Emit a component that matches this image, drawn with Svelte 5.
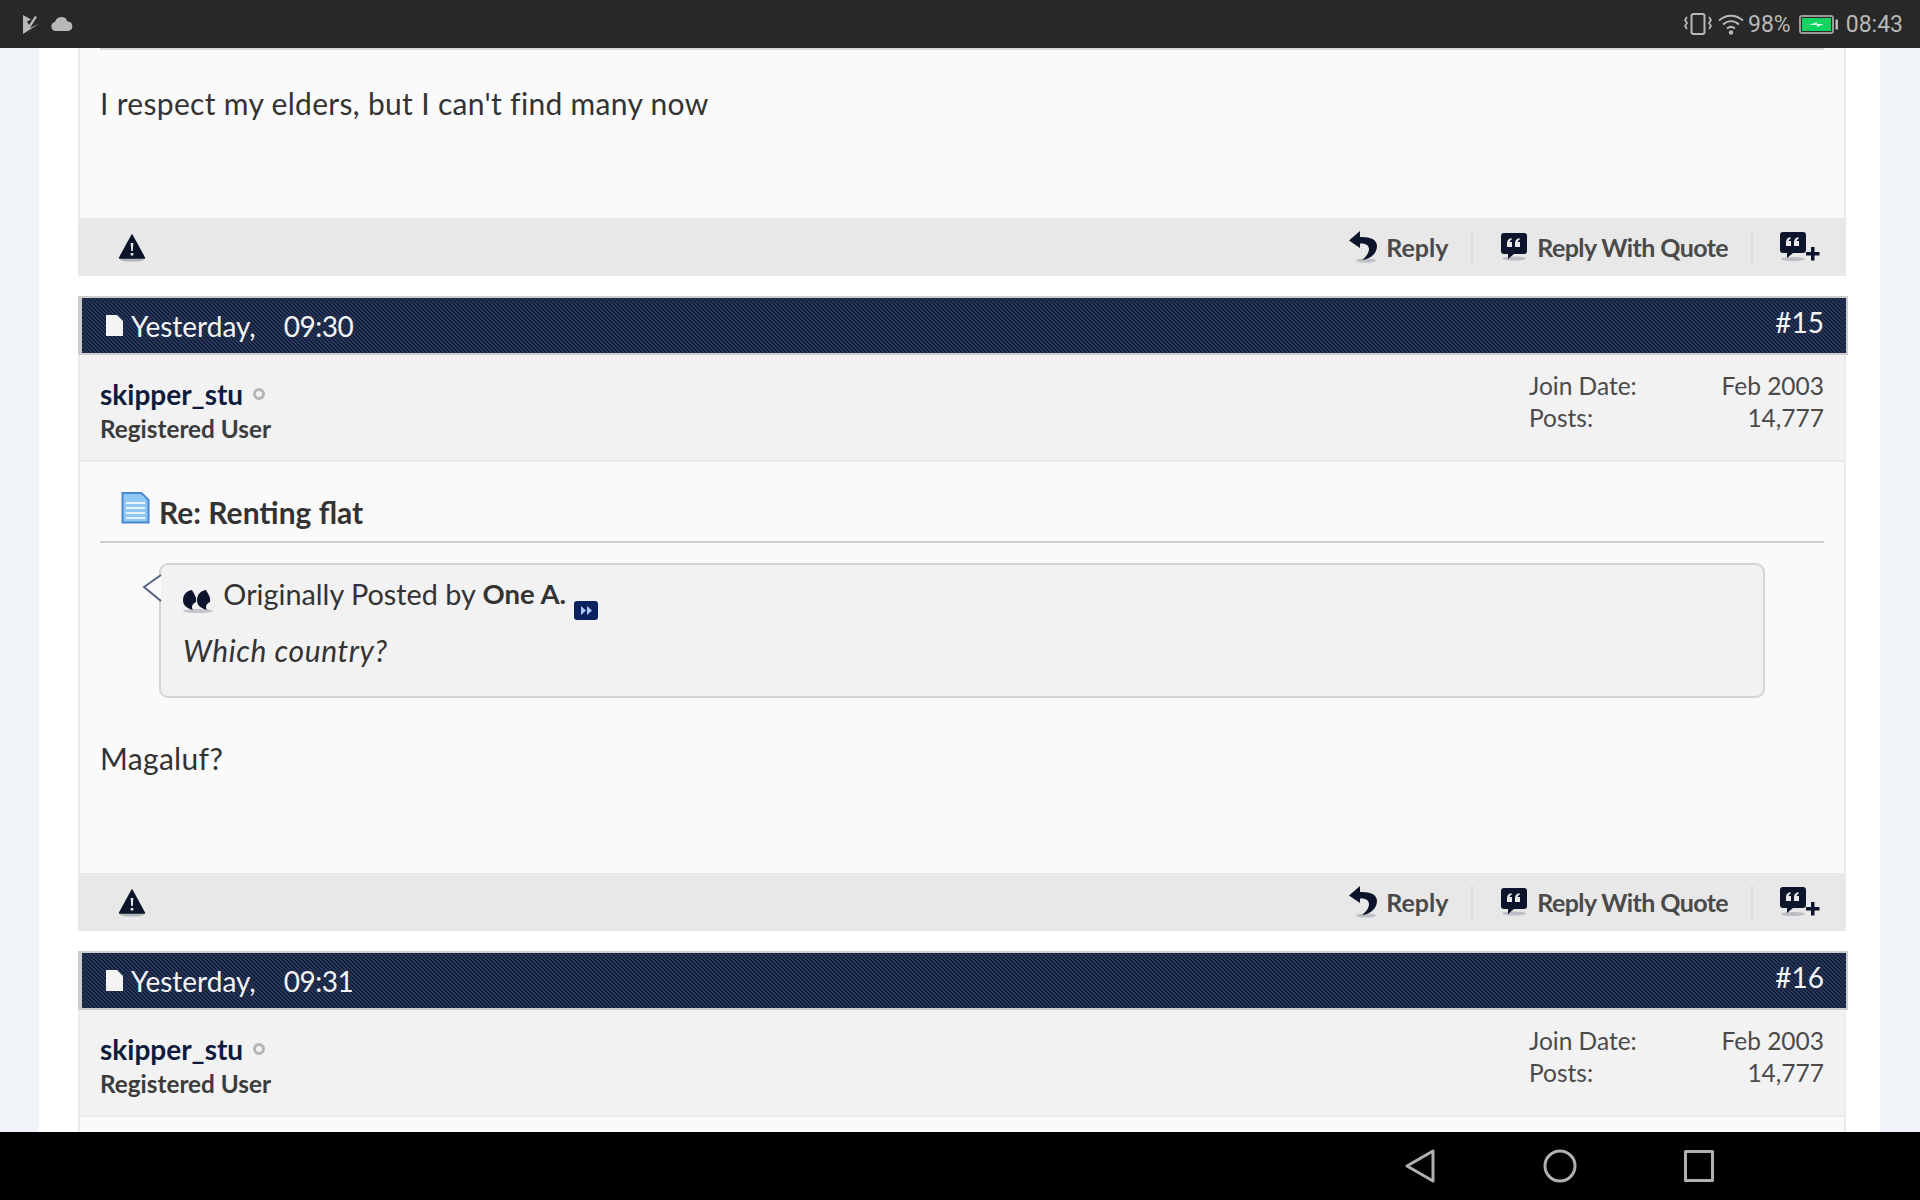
<script>
	const posts = [
		{date: 'Yesterday,', time: '09:30', num: '#15', user: 'skipper_stu', joined: 'Feb 2003', count: '14,777', open: true},
		{date: 'Yesterday,', time: '09:31', num: '#16', user: 'skipper_stu', joined: 'Feb 2003', count: '14,777', open: false}
	]
</script>

{#snippet footer()}
	<div class="post-foot">
		<svg class="warn" width="28" height="28" viewBox="0 0 28 28">
			<ellipse cx="14" cy="25.5" rx="12" ry="2" fill="#0e1a30" opacity="0.25" />
			<path d="M14 1 L26.5 24 H1.5 Z" fill="#0c152b" stroke="#0c152b" stroke-width="1.5" stroke-linejoin="round" />
			<path d="M12.7 9h2.6l-.5 8h-1.6z M12.7 19h2.6v2.6h-2.6z" fill="#e8e8e8" />
		</svg>
		<div class="actions">
			<span class="action">
				<svg width="28" height="32" viewBox="0 0 28 32">
					<ellipse cx="17" cy="29.5" rx="10" ry="2" fill="#0e1a30" opacity="0.2" />
					<path d="M11 0 L0 9.500 L11 17 V12.500 C17 12 20 14.500 20 18 C20 22 17 26 13 29 C22 28 28 22 28 15 C28 8 20 5.500 11 6 Z" fill="#0c152b" />
				</svg>
				Reply
			</span>
			<span class="action sep rwq">
				<svg width="26" height="28" viewBox="0 0 26 28">
					<ellipse cx="13" cy="25.5" rx="12" ry="2" fill="#0e1a30" opacity="0.2" />
					<path d="M3 0h20a3 3 0 0 1 3 3v15a3 3 0 0 1-3 3H13l-6 5v-5H3a3 3 0 0 1-3-3V3a3 3 0 0 1 3-3z" fill="#0c152b" />
					<path d="M6 14V10c0-2.500 1.500-4.500 4.500-5v2c-1.200.3-1.800 1-1.800 2H11v5z M14 14V10c0-2.500 1.500-4.500 4.500-5v2c-1.200.3-1.800 1-1.800 2H19v5z" fill="#e8e8e8" />
				</svg>
				Reply With Quote
			</span>
			<span class="action sep last">
				<svg width="40" height="30" viewBox="0 0 40 30">
					<ellipse cx="13" cy="27" rx="12" ry="2" fill="#0e1a30" opacity="0.2" />
					<path d="M3 0h20a3 3 0 0 1 3 3v15a3 3 0 0 1-3 3H13l-6 5v-5H3a3 3 0 0 1-3-3V3a3 3 0 0 1 3-3z" fill="#0c152b" />
					<path d="M6 14V10c0-2.500 1.500-4.500 4.500-5v2c-1.200.3-1.800 1-1.800 2H11v5z M14 14V10c0-2.500 1.500-4.500 4.500-5v2c-1.200.3-1.800 1-1.800 2H19v5z" fill="#e8e8e8" />
					<path d="M31 15h3.500v5h5v3.500h-5v5H31v-5h-5V20h5z" fill="#0c152b" />
				</svg>
			</span>
		</div>
	</div>
{/snippet}

<div class="screen">
	<header class="status">
		<div class="status-left">
			<svg width="18" height="19" viewBox="0 0 18 19">
				<path d="M0 0 L8 4.500 L4 6.500 L6 10 L12 1 L14 2 L7 13 L16.500 8.500 L0 19 Z" fill="#b8b8b8" />
			</svg>
			<svg width="22" height="14" viewBox="0 0 22 14">
				<path d="M5 14a4.500 4.500 0 0 1-1-8.900 6.500 6.500 0 0 1 12.500-.6A4.800 4.800 0 0 1 17.500 14z" fill="#b8b8b8" />
			</svg>
		</div>
		<div class="status-right">
			<svg width="28" height="22" viewBox="0 0 28 22" fill="none" stroke="#b8b8b8" stroke-width="2">
				<rect x="7.500" y="1" width="13" height="20" rx="2" />
				<path d="M3 4 L1 7 L3 10 L1 13 L3 16 M25 4 L27 7 L25 10 L27 13 L25 16" stroke-width="1.800" />
			</svg>
			<svg class="wifi" width="26" height="21" viewBox="0 0 26 21" fill="none" stroke="#b8b8b8" stroke-width="2">
				<path d="M1 6.500 C8 0 18 0 25 6.500 M5 10.500 C10 6 16 6 21 10.500 M9 14.500 C11.500 12.500 14.500 12.500 17 14.500" />
				<circle cx="13" cy="18.500" r="2.200" fill="#b8b8b8" stroke="none" />
			</svg>
			<span class="pct">98%</span>
			<svg class="batt" width="39" height="19" viewBox="0 0 39 19">
				<rect x="1" y="1" width="33" height="17" rx="2" fill="none" stroke="#9a9a9a" stroke-width="2" />
				<rect x="3" y="3" width="29" height="13" fill="#0fd45f" />
				<rect x="36.500" y="4.500" width="2.500" height="10" fill="#b8b8b8" />
				<path d="M10 10 L18 7 V9 H25 L18 12 V10 Z" fill="#d6f5e2" />
			</svg>
			<span class="clock">08:43</span>
		</div>
	</header>

	<main class="page">
		<div class="column">
			<section class="post top">
				<div class="body">
					<div class="title-rule"></div>
					<p class="message">I respect my elders, but I can't find many now</p>
				</div>
				{@render footer()}
			</section>

			{#each posts as post (post.num)}
				<section class="post">
					<div class="post-head">
						<span class="when">
							<svg width="18" height="21" viewBox="0 0 18 21">
								<path d="M1 0h11l6 6v15H1z" fill="#f4f4f4" />
							</svg>
							{post.date}<span class="time">{post.time}</span>
						</span>
						<span class="num">{post.num}</span>
					</div>
					<div class="user">
						<div class="who">
							<div class="name">
								{post.user}
								<span class="dot"></span>
							</div>
							<div class="rank">Registered User</div>
						</div>
						<dl class="stats">
							<dt>Join Date:</dt>
							<dd>{post.joined}</dd>
							<dt>Posts:</dt>
							<dd>{post.count}</dd>
						</dl>
					</div>
					{#if post.open}
						<div class="body">
							<h2 class="title">
								<svg width="29" height="32" viewBox="0 0 29 32">
									<path d="M1.500 1h19l7 7v22.500h-26z" fill="#8fc8f5" stroke="#4a86cf" stroke-width="2" />
									<path d="M5 11h19M5 16h19M5 21h19M5 26h19" stroke="#e8f4fd" stroke-width="2" />
								</svg>
								Re: Renting flat
							</h2>
							<blockquote class="quote">
								<svg class="arrow" width="20" height="28" viewBox="0 0 20 28">
									<path d="M19 1 L2 13 L19 27" fill="#fafafa" stroke="#556480" stroke-width="2" />
								</svg>
								<div class="quote-by">
									<svg class="quote-icon" width="30" height="24" viewBox="0 0 30 24">
										<ellipse cx="15" cy="22" rx="15" ry="2" fill="#0e1a30" opacity="0.2" />
										<path d="M9 1 C3 2 0 6 0 11 C0 16 3 19 10 21 C8 18 9 15 13 13 C14 8 11 5 9 1z M23 1 C17 2 14 6 14 11 C14 16 17 19 24 21 C22 18 23 15 27 13 C28 8 25 5 23 1z" fill="#0c152b" />
									</svg>
									Originally Posted by <b>One A.</b>
									<svg class="view" width="24" height="19" viewBox="0 0 24 19">
										<rect width="24" height="19" rx="3" fill="#0b2260" />
										<path d="M7 5l5 4.500-5 4.500z M13 5l5 4.500-5 4.500z" fill="#a9c8f0" />
									</svg>
								</div>
								<div class="quote-text">Which country?</div>
							</blockquote>
							<p class="message">Magaluf?</p>
						</div>
						{@render footer()}
					{:else}
						<div class="body stub"></div>
					{/if}
				</section>
			{/each}
		</div>
	</main>

	<nav class="nav">
		<svg width="32" height="36" viewBox="0 0 32 36" fill="none" stroke="#b0b0b0" stroke-width="3" stroke-linejoin="round">
			<path d="M29 3 V33 L3 18 Z" />
		</svg>
		<svg width="34" height="34" viewBox="0 0 34 34" fill="none" stroke="#b0b0b0" stroke-width="3">
			<circle cx="17" cy="17" r="15" />
		</svg>
		<svg width="30" height="32" viewBox="0 0 30 32" fill="none" stroke="#b0b0b0" stroke-width="3" stroke-linejoin="round">
			<rect x="1.500" y="1.500" width="27" height="29" />
		</svg>
	</nav>
</div>

<style>
	:global(body) {
		background: #f0f3f8;
	}

	.screen {
		display: flex;
		flex-direction: column;
		height: 1200px;
		overflow: hidden;
		font-family: Lato, 'Open Sans', sans-serif;
		color: #333;
	}

	.status {
		flex: none;
		height: 48px;
		background: #282828;
		display: flex;
		align-items: center;
		justify-content: space-between;
		padding: 0 17px 0 23px;
		color: #b8b8b8;
		font-family: Roboto, sans-serif;
		font-size: 23px;
	}

	.status-left,
	.status-right {
		display: flex;
		align-items: center;
	}

	.status-left {
		gap: 10px;
	}

	.wifi {
		margin-left: 6px;
	}

	.pct {
		margin-left: 4px;
	}

	.batt {
		margin-left: 8px;
	}

	.clock {
		margin-left: 8px;
	}

	.page {
		flex: 1;
		min-height: 0;
		overflow: hidden;
		padding: 0 40px 0 39px;
	}

	.column {
		background: #fff;
		height: 100%;
		padding: 0 34px 0 39px;
		display: flex;
		flex-direction: column;
		gap: 20px;
	}

	.body {
		background: #fafafa;
		border-left: 2px solid #ebebeb;
		border-right: 2px solid #ebebeb;
		padding: 0 20px;
	}

	.body.stub {
		height: 40px;
	}

	.title-rule {
		height: 2px;
		background: #d8d8d8;
	}

	.message {
		margin: 0;
		padding: 33px 0 95px;
		font-size: 30px;
		line-height: 40px;
		letter-spacing: 0.32px;
	}

	.post-foot {
		height: 58px;
		background: #e8e8e8;
		display: flex;
		align-items: center;
		justify-content: space-between;
		padding: 0 26px 0 40px;
	}

	.warn {
		margin-top: 2px;
	}

	.actions {
		display: flex;
		align-items: center;
		color: #4a4a4a;
		font-size: 25px;
		font-weight: 700;
	}

	.action {
		display: flex;
		align-items: center;
		gap: 9px;
		height: 34px;
		padding-right: 23px;
	}

	.action.sep {
		border-left: 2px solid #dcdcdc;
		padding-left: 28px;
	}

	.action.rwq {
		letter-spacing: -0.6px;
		gap: 10px;
	}

	.action.last {
		padding: 0 0 0 27px;
	}

	.post-head {
		height: 55px;
		margin-right: -2px;
		border: solid #ccc;
		border-width: 2px 2px 2px 4px;
		box-sizing: content-box;
		background-color: #1c2b4b;
		background-image: linear-gradient(45deg, #141f3a 25%, #27385c 25%, #27385c 50%, #141f3a 50%, #141f3a 75%, #27385c 75%);
		background-size: 4px 4px;
		display: flex;
		align-items: center;
		justify-content: space-between;
		padding: 0 22px 0 23px;
		color: #f4f4f4;
		font-size: 28px;
	}

	.when {
		display: flex;
		align-items: center;
		gap: 8px;
	}

	.time {
		margin-left: 20px;
		letter-spacing: -0.5px;
	}

	.num {
		margin-top: -8px;
	}

	.user {
		height: 107px;
		box-sizing: border-box;
		background: #f2f2f2;
		border: solid #ebebeb;
		border-width: 0 2px 2px;
		display: flex;
		align-items: flex-start;
		justify-content: space-between;
		padding: 15px 20px 0;
	}

	.who {
		margin-top: 5px;
	}

	.name {
		font-size: 28px;
		font-weight: 700;
		line-height: 38px;
		color: #0f1b3c;
		display: flex;
		align-items: center;
		gap: 10px;
	}

	.dot {
		width: 12px;
		height: 12px;
		box-sizing: border-box;
		border: 3px solid #b4b4b4;
		border-radius: 50%;
	}

	.rank {
		font-size: 24.3px;
		font-weight: 700;
		line-height: 32px;
		color: #3c3c3c;
	}

	.stats {
		margin: 0;
		width: 295px;
		display: grid;
		grid-template-columns: 1fr auto;
		font-size: 24.5px;
		line-height: 32px;
		color: #4a4a4a;
	}

	.stats dd {
		margin: 0;
		text-align: right;
	}

	.title {
		margin: 0;
		height: 81px;
		border-bottom: 2px solid #ccc;
		display: flex;
		align-items: flex-end;
		gap: 9px;
		padding: 0 0 9px 21px;
		box-sizing: border-box;
		font-size: 30px;
		font-weight: 700;
		line-height: 40px;
	}

	.title svg {
		margin-bottom: 8px;
	}

	.quote {
		position: relative;
		margin: 20px 59px 7px 59px;
		height: 135px;
		box-sizing: border-box;
		background: #f2f2f2;
		border: 2px solid #d4d4d4;
		border-radius: 9px;
		padding: 10px 22px;
		font-size: 28.8px;
	}

	.arrow {
		position: absolute;
		left: -19px;
		top: 9px;
	}

	.quote-by {
		display: flex;
		align-items: center;
		line-height: 38px;
		white-space: pre;
	}

	.quote-by b {
		font-size: 27.5px;
	}

	.quote-icon {
		margin: 14px 3px 0 0;
	}

	.view {
		margin: 16px 0 -16px 8px;
	}

	.quote-text {
		font-style: italic;
		font-size: 30px;
		letter-spacing: 0.6px;
		line-height: 40px;
		margin-top: 17px;
	}

	.nav {
		flex: none;
		height: 68px;
		background: #000;
		display: flex;
		align-items: center;
		padding-left: 1404px;
		gap: 107px;
	}
</style>
